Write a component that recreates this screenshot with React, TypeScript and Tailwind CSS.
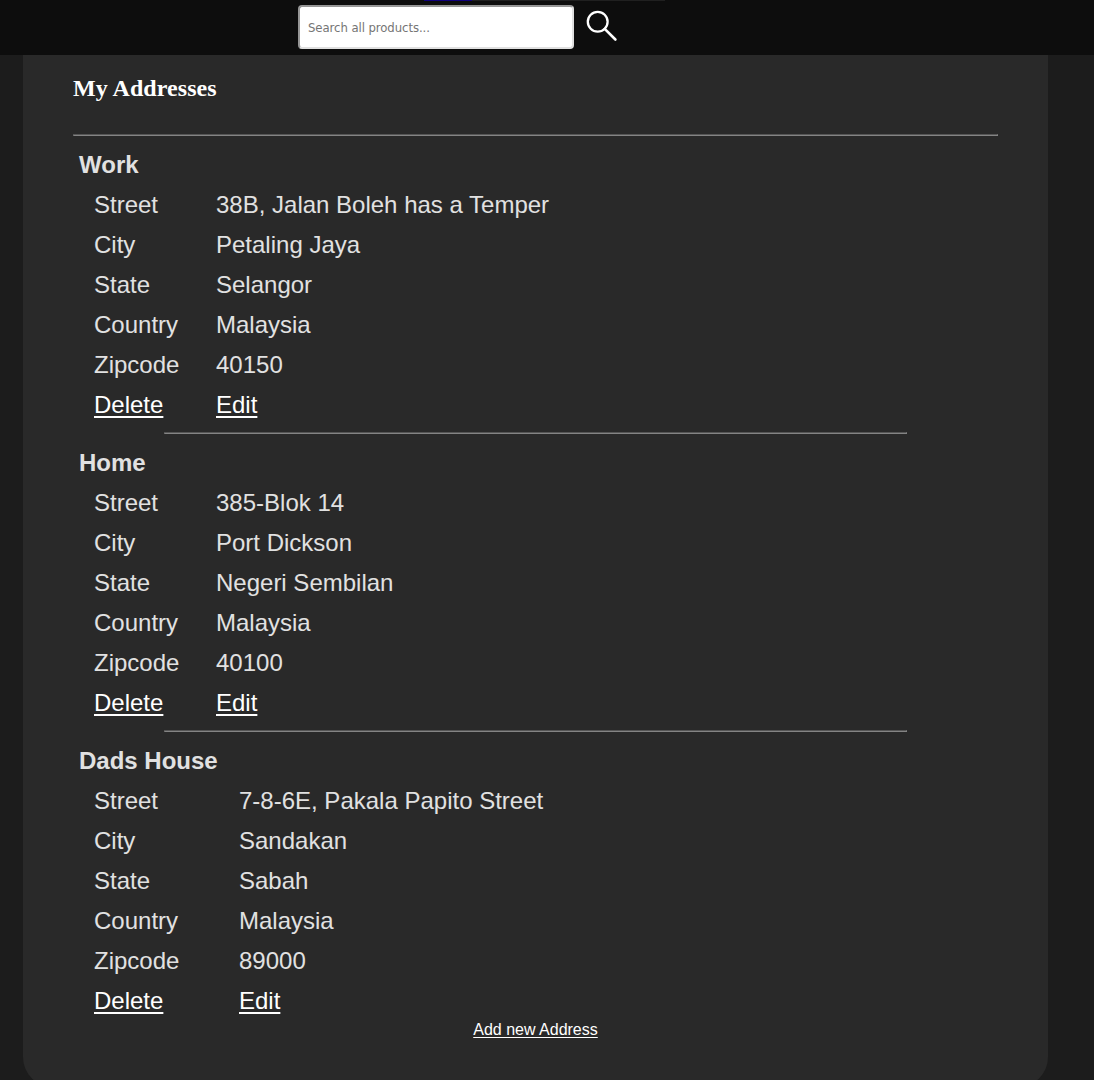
type Address = {
  name: string;
  fields: [string, string][];
  labelWidth: string;
};

const addresses: Address[] = [
  {
    name: 'Work',
    labelWidth: 'w-[122px]',
    fields: [
      ['Street', '38B, Jalan Boleh has a Temper'],
      ['City', 'Petaling Jaya'],
      ['State', 'Selangor'],
      ['Country', 'Malaysia'],
      ['Zipcode', '40150'],
    ],
  },
  {
    name: 'Home',
    labelWidth: 'w-[122px]',
    fields: [
      ['Street', '385-Blok 14'],
      ['City', 'Port Dickson'],
      ['State', 'Negeri Sembilan'],
      ['Country', 'Malaysia'],
      ['Zipcode', '40100'],
    ],
  },
  {
    name: 'Dads House',
    labelWidth: 'w-[145px]',
    fields: [
      ['Street', '7-8-6E, Pakala Papito Street'],
      ['City', 'Sandakan'],
      ['State', 'Sabah'],
      ['Country', 'Malaysia'],
      ['Zipcode', '89000'],
    ],
  },
];

const actionLink = 'text-white underline decoration-2 underline-offset-[3px] [text-decoration-skip-ink:none]';

function Divider({ className = '' }: { className?: string }) {
  return <div className={`h-0.5 border border-t-[#555555] border-l-[#555555] border-b-[#848484] border-r-[#848484] ${className}`} />;
}

function AddressBlock({ address }: { address: Address }) {
  return (
    <section className="pl-1.5 text-2xl leading-10 text-[#e1e1e1]">
      <h2 className="font-bold">{address.name}</h2>
      <dl className="pl-[15px]">
        {address.fields.map(([label, value]) => (
          <div key={label} className="flex h-10">
            <dt className={address.labelWidth}>{label}</dt>
            <dd>{value}</dd>
          </div>
        ))}
      </dl>
      <div className="flex h-10 pl-[15px]">
        <div className={address.labelWidth}>
          <a href="#" className={actionLink}>Delete</a>
        </div>
        <a href="#" className={actionLink}>Edit</a>
      </div>
    </section>
  );
}

function Header() {
  return (
    <header className="relative flex h-[55px] shrink-0 items-start bg-[#0d0d0d] pl-[298px] pt-[5px]">
      <div className="absolute left-[424px] top-0 flex h-px w-[241px] bg-[#202020]">
        <div className="h-px w-12 bg-[#0e007c]" />
      </div>
      <input
        type="text"
        placeholder="Search all products..."
        className="h-11 w-[276px] rounded-[4px] border-2 border-t-[#969696] border-l-[#969696] border-b-[#e0e0e0] border-r-[#e0e0e0] bg-white px-2 pt-px font-['DejaVu_Sans_Condensed','DejaVu_Sans',sans-serif] text-[13px] tracking-[-0.07px] text-black placeholder:text-[#757575]"
      />
      <svg className="ml-3 mt-1" width="34" height="34" viewBox="0 0 34 34" fill="none" stroke="#fff">
        <circle cx="11.7" cy="12.7" r="9.9" strokeWidth="2.3" />
        <path d="M18.7 19.8L29.4 30.5" strokeWidth="2.6" strokeLinecap="round" />
      </svg>
    </header>
  );
}

export default function App() {
  return (
    <div className="flex h-[1080px] flex-col overflow-hidden bg-[#1c1c1c] font-['Liberation_Sans',Arial,sans-serif]">
      <Header />
      <main className="ml-[23px] h-[1032px] w-[1025px] shrink-0 rounded-b-[30px] bg-[#292929] px-[50px] pt-[19px]">
        <h1 className="h-[60px] font-['Liberation_Serif','Times_New_Roman',serif] text-2xl leading-7 font-bold tracking-[0.07px] text-white">
          My Addresses
        </h1>
        <Divider className="mb-[9px]" />
        {addresses.map((address, i) => (
          <div key={address.name}>
            {i > 0 && <Divider className="mx-auto mt-[7px] mb-[9px] w-[743px]" />}
            <AddressBlock address={address} />
          </div>
        ))}
        <div className="text-center text-base leading-[18px]">
          <a href="#" className="text-white underline decoration-1 underline-offset-2">Add new Address</a>
        </div>
      </main>
    </div>
  );
}
